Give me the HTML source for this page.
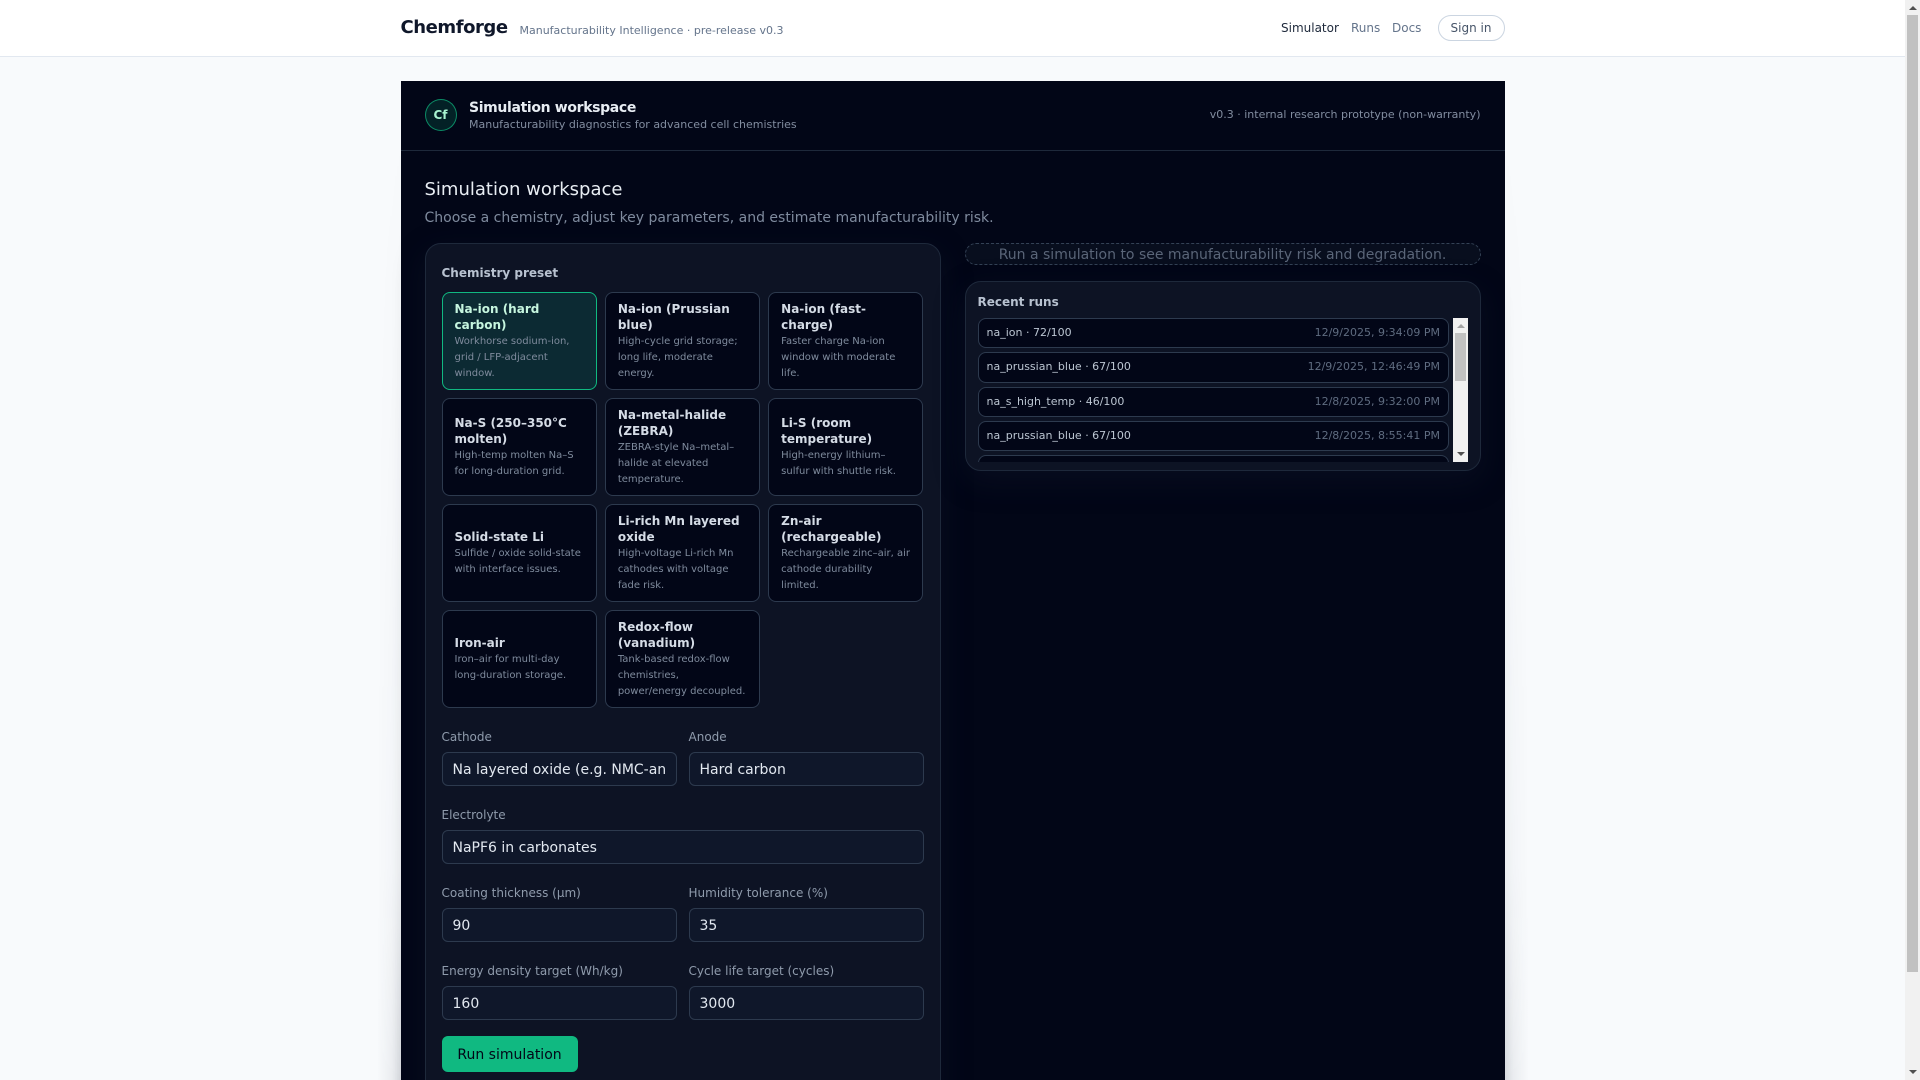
<!DOCTYPE html>
<html lang="en">
<head>
<meta charset="utf-8">
<title>Chemforge</title>
<style>
*{box-sizing:border-box}
html,body{margin:0;padding:0;width:1920px;height:1080px;overflow:hidden;background:#f8fafc;font-family:"DejaVu Sans",sans-serif}
.page{position:relative;width:1920px;height:1080px;overflow:hidden;background:#f8fafc;opacity:.999}
.nav{position:absolute;left:0;top:0;width:1905px;height:57px;background:#fff;border-bottom:1px solid #e2e8f0}
.brand{position:absolute;left:400.5px;top:16px;font-size:18px;line-height:24px;font-weight:700;letter-spacing:-.45px;color:#0f172a;white-space:nowrap}
.tag{position:absolute;left:519.5px;top:23px;font-size:11px;line-height:16px;color:#64748b;white-space:nowrap}
.nl{position:absolute;top:20px;font-size:12px;line-height:16px;color:#64748b;white-space:nowrap}
.signin{position:absolute;left:1437.5px;top:15px;width:67px;height:26px;border:1px solid #cbd5e1;border-radius:13px;font-size:12px;line-height:24px;text-align:center;color:#475569}
.sh{position:absolute;top:120px;width:24px;height:960px;-webkit-mask-image:linear-gradient(to bottom,transparent 0,rgba(0,0,0,.15) 40%,rgba(0,0,0,.35) 78%,#000 100%);mask-image:linear-gradient(to bottom,transparent 0,rgba(0,0,0,.15) 40%,rgba(0,0,0,.35) 78%,#000 100%)}
.main{position:absolute;left:400.5px;top:81px;width:1104px;height:1100px;background:#020617}
.hdr{position:absolute;left:0;top:0;width:1104px;height:70px;border-bottom:1px solid #1e293b}
.logo{position:absolute;left:24px;top:18px;width:32px;height:32px;border-radius:50%;background:rgba(16,185,129,.15);border:1px solid rgba(16,185,129,.7);color:#a7f3d0;font-size:12px;font-weight:700;line-height:30px;text-align:center}
.ht{position:absolute;left:68.5px;top:17px;font-size:14px;line-height:20px;font-weight:700;letter-spacing:-.35px;color:#e8edf3;white-space:nowrap}
.hs{position:absolute;left:68.5px;top:36px;font-size:11px;line-height:16px;color:#828da0;white-space:nowrap}
.hr{position:absolute;right:24px;top:26px;font-size:11px;line-height:16px;color:#828da0;white-space:nowrap}
.h1{position:absolute;left:24px;top:95px;font-size:18px;line-height:28px;color:#e8edf3;white-space:nowrap}
.p{position:absolute;left:24px;top:127px;font-size:14px;line-height:20px;color:#7f8b9e;white-space:nowrap}
.panel{position:absolute;background:#0d1324;border:1px solid #1e293b;border-radius:16px;box-shadow:0 10px 30px rgba(15,23,42,.45)}
.lab{position:absolute;font-size:12px;line-height:16px;font-weight:700;color:#b8c2d0;white-space:nowrap}
.card{position:absolute;width:155.33px;height:98px;background:#020617;border:1px solid #2d3a4e;border-radius:8px;padding:0 12px;display:flex;flex-direction:column;justify-content:center}
.card b{display:block;font-size:12px;line-height:16px;font-weight:700;color:#d5dce6}
.card span{display:block;font-size:10px;line-height:16px;color:#7f8b9d;position:relative;top:1px}
.card.sel{background:#0c2a33;border-color:#10b981}
.card.sel b{color:#c6f6df}
.fl{position:absolute;font-size:12px;line-height:16px;color:#8f9bac;white-space:nowrap}
.inp{position:absolute;height:34px;background:#0f172a;border:1px solid #2d3a4e;border-radius:6px;padding:1px 10px 0;font-size:14px;line-height:32px;color:#e2e8f0;white-space:nowrap;overflow:hidden}
.btn{position:absolute;left:41px;top:955px;width:136px;height:36px;background:#10b981;border-radius:6px;font-size:14px;line-height:38px;text-align:center;color:#020617}
.note{position:absolute;left:564.5px;top:162px;width:516px;height:22px;border:1px dashed #334155;border-radius:16px;background:#080e1e;font-size:14px;line-height:22px;text-indent:-1px;text-align:center;color:#5a6578;white-space:nowrap;overflow:hidden}
.run{position:absolute;left:577px;width:471.5px;height:30.33px;background:#020617;border:1px solid #2d3a4e;border-radius:8px;font-size:11px;line-height:28.33px;padding:0 8px;color:#bcc6d2;white-space:nowrap}
.run i{position:absolute;right:8px;top:0;font-style:normal;color:#5f6c80}
.clip{position:absolute;left:0;top:0;width:1104px;height:381px;overflow:hidden}
.track{position:absolute;background:#f1f1f1}
.thumb{position:absolute;background:#c1c1c1}
.up{position:absolute;width:0;height:0;border-left:4px solid transparent;border-right:4px solid transparent;border-bottom:4px solid #a3a3a3}
.dn{position:absolute;width:0;height:0;border-left:4px solid transparent;border-right:4px solid transparent;border-top:4px solid #505050}
</style>
</head>
<body>
<div class="page">
<div class="nav">
  <div class="brand">Chemforge</div>
  <div class="tag">Manufacturability Intelligence · pre-release v0.3</div>
  <div class="nl" style="left:1281px;color:#1e293b">Simulator</div>
  <div class="nl" style="left:1351px">Runs</div>
  <div class="nl" style="left:1392px">Docs</div>
  <div class="signin">Sign in</div>
</div>

<div class="sh" style="left:376.5px;background:linear-gradient(to left,rgba(15,23,42,.14),rgba(15,23,42,.06) 35%,rgba(15,23,42,0))"></div>
<div class="sh" style="left:1504.5px;background:linear-gradient(to right,rgba(15,23,42,.14),rgba(15,23,42,.06) 35%,rgba(15,23,42,0))"></div>

<div class="main">
  <div class="hdr">
    <div class="logo">Cf</div>
    <div class="ht">Simulation workspace</div>
    <div class="hs">Manufacturability diagnostics for advanced cell chemistries</div>
    <div class="hr">v0.3 · internal research prototype (non-warranty)</div>
  </div>
  <div class="h1">Simulation workspace</div>
  <div class="p">Choose a chemistry, adjust key parameters, and estimate manufacturability risk.</div>

  <div class="panel" style="left:24px;top:162px;width:516px;height:1000px"></div>
  <div class="lab" style="left:41px;top:184px">Chemistry preset</div>

  <div class="card sel" style="left:41px;top:210.5px"><b>Na-ion (hard carbon)</b><span>Workhorse sodium-ion, grid / LFP-adjacent window.</span></div>
  <div class="card" style="left:204.33px;top:210.5px"><b>Na-ion (Prussian blue)</b><span>High-cycle grid storage; long life, moderate energy.</span></div>
  <div class="card" style="left:367.67px;top:210.5px"><b>Na-ion (fast-charge)</b><span>Faster charge Na-ion window with moderate life.</span></div>

  <div class="card" style="left:41px;top:316.5px"><b>Na-S (250–350°C molten)</b><span>High-temp molten Na–S for long-duration grid.</span></div>
  <div class="card" style="left:204.33px;top:316.5px"><b>Na-metal-halide (ZEBRA)</b><span>ZEBRA-style Na–metal–halide at elevated temperature.</span></div>
  <div class="card" style="left:367.67px;top:316.5px"><b>Li-S (room temperature)</b><span>High-energy lithium–sulfur with shuttle risk.</span></div>

  <div class="card" style="left:41px;top:422.5px"><b>Solid-state Li</b><span>Sulfide / oxide solid-state with interface issues.</span></div>
  <div class="card" style="left:204.33px;top:422.5px"><b>Li-rich Mn layered oxide</b><span>High-voltage Li-rich Mn cathodes with voltage fade risk.</span></div>
  <div class="card" style="left:367.67px;top:422.5px"><b>Zn-air (rechargeable)</b><span>Rechargeable zinc–air, air cathode durability limited.</span></div>

  <div class="card" style="left:41px;top:529px"><b>Iron-air</b><span>Iron–air for multi-day long-duration storage.</span></div>
  <div class="card" style="left:204.33px;top:529px"><b>Redox-flow (vanadium)</b><span>Tank-based redox-flow chemistries, power/energy decoupled.</span></div>

  <div class="fl" style="left:41px;top:648px">Cathode</div>
  <div class="fl" style="left:288px;top:648px">Anode</div>
  <div class="inp" style="left:41px;top:671px;width:235px">Na layered oxide (e.g. NMC-an</div>
  <div class="inp" style="left:288px;top:671px;width:235px">Hard carbon</div>

  <div class="fl" style="left:41px;top:726px">Electrolyte</div>
  <div class="inp" style="left:41px;top:749px;width:482px">NaPF6 in carbonates</div>

  <div class="fl" style="left:41px;top:804px">Coating thickness (µm)</div>
  <div class="fl" style="left:288px;top:804px">Humidity tolerance (%)</div>
  <div class="inp" style="left:41px;top:827px;width:235px">90</div>
  <div class="inp" style="left:288px;top:827px;width:235px">35</div>

  <div class="fl" style="left:41px;top:882px">Energy density target (Wh/kg)</div>
  <div class="fl" style="left:288px;top:882px">Cycle life target (cycles)</div>
  <div class="inp" style="left:41px;top:905px;width:235px">160</div>
  <div class="inp" style="left:288px;top:905px;width:235px">3000</div>

  <div class="btn">Run simulation</div>

  <div class="note">Run a simulation to see manufacturability risk and degradation.</div>

  <div class="panel" style="left:564.5px;top:200px;width:516px;height:190px"></div>
  <div class="lab" style="left:577px;top:213px">Recent runs</div>

  <div class="clip">
    <div class="run" style="top:237px">na_ion · 72/100<i>12/9/2025, 9:34:09 PM</i></div>
    <div class="run" style="top:271.33px">na_prussian_blue · 67/100<i>12/9/2025, 12:46:49 PM</i></div>
    <div class="run" style="top:305.67px">na_s_high_temp · 46/100<i>12/8/2025, 9:32:00 PM</i></div>
    <div class="run" style="top:340px">na_prussian_blue · 67/100<i>12/8/2025, 8:55:41 PM</i></div>
    <div class="run" style="top:374.33px">na_ion · 72/100<i>12/8/2025, 8:12:10 PM</i></div>
  </div>
</div>

<div class="track" style="left:1453px;top:318px;width:15px;height:144px"></div>
<div class="thumb" style="left:1455px;top:333px;width:11px;height:48px"></div>
<div class="up" style="left:1456.5px;top:324px"></div>
<div class="dn" style="left:1456.5px;top:452px"></div>

<div class="track" style="left:1905px;top:0;width:15px;height:1080px"></div>
<div class="thumb" style="left:1907px;top:15px;width:11px;height:957px"></div>
<div class="up" style="left:1908.5px;top:6px;border-bottom-color:#505050"></div>
<div class="dn" style="left:1908.5px;top:1070px"></div>
</div>
</body>
</html>
